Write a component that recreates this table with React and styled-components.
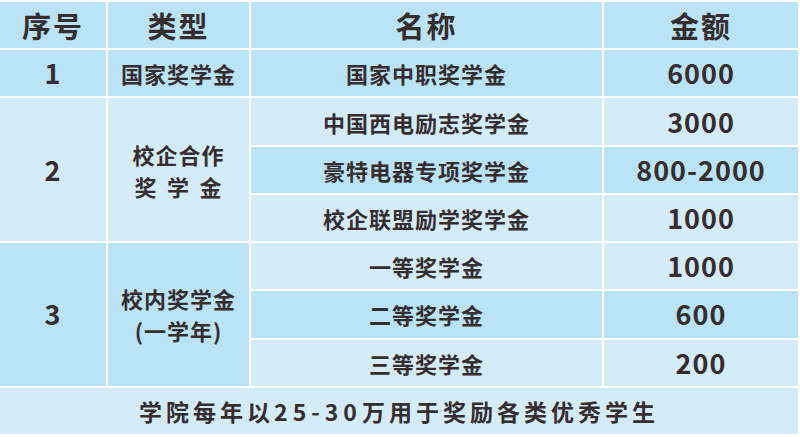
import React from 'react';
import styled, { createGlobalStyle } from 'styled-components';

const GlobalStyle = createGlobalStyle`
  html, body {
    margin: 0;
    padding: 0;
    background: #ffffff;
  }
`;

const tones = {
  dark: '#bae3f8',
  light: '#d4ecf9',
};

const Table = styled.div`
  display: grid;
  grid-template-columns: 106px 141px 351px 194px;
  grid-template-rows: repeat(9, 1fr);
  gap: 2px;
  width: 798px;
  height: 432px;
  margin-top: 2px;
  background: #ffffff;
  font-family: "Noto Sans CJK SC", "Noto Sans", sans-serif;
  font-weight: 700;
  color: #352d2e;
`;

const Cell = styled.div`
  display: flex;
  align-items: center;
  justify-content: center;
  flex-direction: column;
  background: ${p => tones[p.$tone]};
  grid-row: ${p => (p.$rows ? `span ${p.$rows}` : 'auto')};
  grid-column: ${p => (p.$cols ? `span ${p.$cols}` : 'auto')};
  font-size: 22px;
  letter-spacing: 1px;
  line-height: 32px;
  text-align: center;
`;

const HeadCell = styled(Cell)`
  font-size: 29px;
  letter-spacing: 2px;
`;

const Amount = styled.span`
  font-size: 27px;
  letter-spacing: 1px;
`;

const Spread = styled.span`
  display: flex;
  justify-content: space-between;
  width: 88px;
`;

const Footer = styled(Cell)`
  font-size: 23px;
  letter-spacing: 4px;
`;

const Digits = styled.span`
  letter-spacing: 5px;
`;

const rows2 = [
  { name: '中国西电励志奖学金', amount: '3000', tone: 'light' },
  { name: '豪特电器专项奖学金', amount: '800-2000', tone: 'dark' },
  { name: '校企联盟励学奖学金', amount: '1000', tone: 'light' },
];

const rows3 = [
  { name: '一等奖学金', amount: '1000', tone: 'light' },
  { name: '二等奖学金', amount: '600', tone: 'dark' },
  { name: '三等奖学金', amount: '200', tone: 'light' },
];

export default function App() {
  return (
    <>
      <GlobalStyle />
      <Table>
        <HeadCell $tone="dark">序号</HeadCell>
        <HeadCell $tone="dark">类型</HeadCell>
        <HeadCell $tone="dark">名称</HeadCell>
        <HeadCell $tone="dark">金额</HeadCell>

        <Cell $tone="dark"><Amount>1</Amount></Cell>
        <Cell $tone="dark">国家奖学金</Cell>
        <Cell $tone="dark">国家中职奖学金</Cell>
        <Cell $tone="dark"><Amount>6000</Amount></Cell>

        {rows2.map((r, i) => (
          <React.Fragment key={r.name}>
            {i === 0 && (
              <>
                <Cell $tone="light" $rows={3}><Amount>2</Amount></Cell>
                <Cell $tone="light" $rows={3}>
                  <span>校企合作</span>
                  <Spread><span>奖</span><span>学</span><span>金</span></Spread>
                </Cell>
              </>
            )}
            <Cell $tone={r.tone}>{r.name}</Cell>
            <Cell $tone={r.tone}><Amount>{r.amount}</Amount></Cell>
          </React.Fragment>
        ))}

        {rows3.map((r, i) => (
          <React.Fragment key={r.name}>
            {i === 0 && (
              <>
                <Cell $tone="dark" $rows={3}><Amount>3</Amount></Cell>
                <Cell $tone="dark" $rows={3}>
                  <span>校内奖学金</span>
                  <span>(一学年)</span>
                </Cell>
              </>
            )}
            <Cell $tone={r.tone}>{r.name}</Cell>
            <Cell $tone={r.tone}><Amount>{r.amount}</Amount></Cell>
          </React.Fragment>
        ))}

        <Footer $tone="light" $cols={4}>
          <span>学院每年以<Digits>25-30</Digits>万用于奖励各类优秀学生</span>
        </Footer>
      </Table>
    </>
  );
}
